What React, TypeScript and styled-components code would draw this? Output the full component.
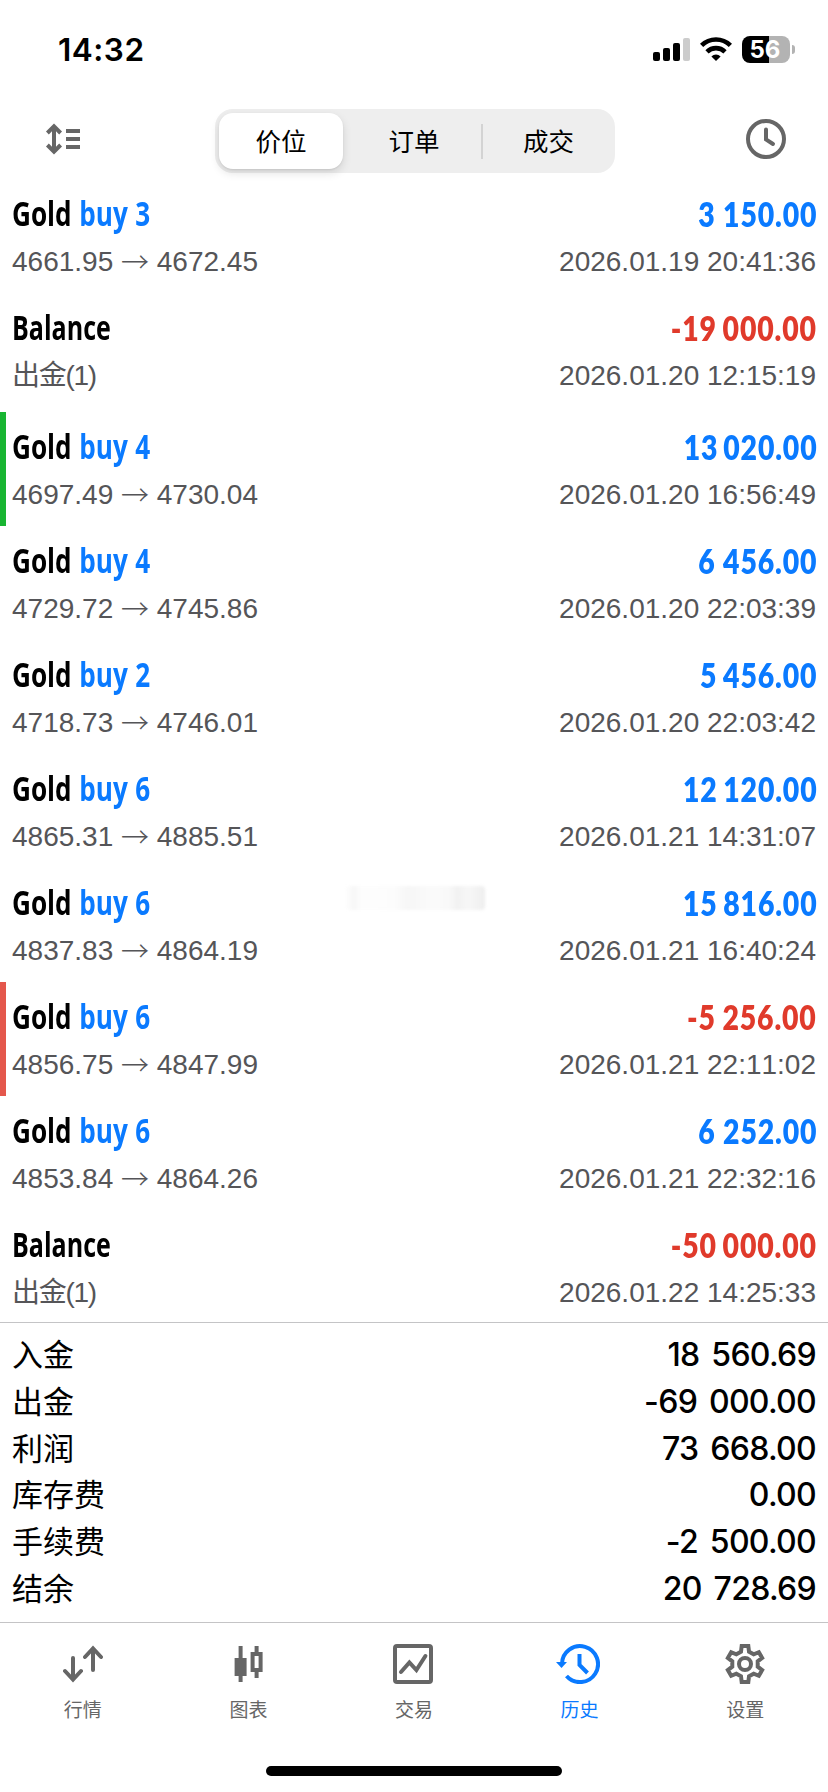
import React from 'react';
import styled, { createGlobalStyle } from 'styled-components';

const BLUE = '#0a7aff';
const RED = '#e03a2b';
const GREY = '#666666';

const Global = createGlobalStyle`
  * { box-sizing: border-box; }
  body { margin: 0; background: #fff; color: #000; font-family: "Inter", "Noto Sans CJK SC", sans-serif; }
`;

const Screen = styled.div`
  width: 828px;
  height: 1792px;
  display: flex;
  flex-direction: column;
  background: #fff;
  overflow: hidden;
  position: relative;
`;

const StatusBar = styled.div`
  height: 100px;
  flex: none;
  display: flex;
  justify-content: space-between;
  padding: 0 33px 0 58px;
`;

const Clock = styled.div`
  font-size: 31.5px;
  font-weight: 600;
  line-height: 40px;
  margin-top: 30px;
  letter-spacing: 0.5px;
`;

const StatusIcons = styled.div`
  display: flex;
  align-items: flex-start;
  margin-top: 36px;
`;

const Battery = styled.div`
  width: 48px;
  height: 27px;
  margin-left: 10px;
  border-radius: 8px;
  background: linear-gradient(90deg, #000 27px, #b3b3b3 27px);
  color: #fff;
  font-size: 24px;
  font-weight: 700;
  line-height: 27px;
  text-align: center;
  padding-right: 2px;
`;

const Nub = styled.div`
  width: 3px;
  height: 9px;
  margin: 9px 0 0 2px;
  border-radius: 0 4px 4px 0;
  background: #b3b3b3;
`;

const Toolbar = styled.div`
  height: 79px;
  flex: none;
  display: flex;
  justify-content: space-between;
  align-items: flex-start;
  padding: 9px 42px 0 44px;
`;

const ToolSlot = styled.div`
  width: 40px;
  height: 60px;
  display: flex;
  align-items: center;
`;

const Segments = styled.div`
  width: 400px;
  height: 64px;
  border-radius: 18px;
  background: #eeeeee;
  padding: 4px;
  display: flex;
  align-items: center;
`;

const Segment = styled.div<{ $active?: boolean; $w: number; $nudge?: number }>`
  width: ${(p) => p.$w}px;
  height: 56px;
  padding-left: ${(p) => p.$nudge ?? 0}px;
  border-radius: 14px;
  background: ${(p) => (p.$active ? '#fff' : 'transparent')};
  box-shadow: ${(p) => (p.$active ? '0 4px 10px rgba(0,0,0,0.12), 0 1px 2px rgba(0,0,0,0.08)' : 'none')};
  font: 400 25.5px/54px "Noto Sans CJK SC", sans-serif;
  text-align: center;
`;

const SegmentRule = styled.div`
  width: 2px;
  height: 35px;
  background: #d3d3d3;
`;

const List = styled.div`
  height: 1143px;
  flex: none;
  display: flex;
  flex-direction: column;
`;

const Deal = styled.div<{ $mark?: string; $h: number }>`
  height: ${(p) => p.$h}px;
  flex: none;
  padding: 11px 12px 0 6px;
  border-left: 6px solid ${(p) => p.$mark || 'transparent'};
`;

const Line = styled.div`
  height: 48px;
  display: flex;
  justify-content: space-between;
`;

const Name = styled.div<{ $scale: number }>`
  font: 700 33.5px/47px "Open Sans", sans-serif;
  white-space: pre;
  transform: scaleX(${(p) => p.$scale});
  transform-origin: left;
  word-spacing: 1px;
`;

const Side = styled.span`
  color: ${BLUE};
`;

const Amount = styled.div<{ $gap: number; $loss: boolean }>`
  font: 800 33px/48px Lato, sans-serif;
  color: ${(p) => (p.$loss ? RED : BLUE)};
  transform: scaleX(0.86);
  transform-origin: right;
  letter-spacing: 1px;
  margin-right: -1px;
  word-spacing: ${(p) => p.$gap}px;
`;

const Detail = styled.div<{ $tight?: boolean }>`
  font: 400 28px/47px "Liberation Sans", "Noto Sans CJK SC", sans-serif;
  font-kerning: none;
  letter-spacing: ${(p) => (p.$tight ? '-1.3px' : 'normal')};
  color: #555558;
  white-space: pre;
`;

const Arrow = styled.span`
  font-family: "Noto Sans CJK SC", sans-serif;
  font-weight: 300;
  line-height: 1;
  vertical-align: -2px;
`;

const Totals = styled.div`
  height: 300px;
  flex: none;
  border-top: 1px solid #c4c4c6;
  padding: 9px 12px 0;
`;

const TotalRow = styled.div`
  height: 46.8px;
  display: flex;
  justify-content: space-between;
  align-items: flex-start;
`;

const TotalLabel = styled.div`
  font: 400 31px/46px "Noto Sans CJK SC", sans-serif;
  margin-top: -2px;
`;

const TotalValue = styled.div`
  font: 500 32px/46px Inter, sans-serif;
  letter-spacing: -0.7px;
  word-spacing: 4px;
`;

const Tabs = styled.div`
  flex: 1;
  border-top: 1px solid #c4c4c6;
  display: grid;
  grid-template-columns: repeat(5, 1fr);
  padding-top: 21px;
  align-content: start;
`;

const Tab = styled.div<{ $active?: boolean }>`
  display: flex;
  flex-direction: column;
  align-items: center;
  gap: 10px;
  color: ${(p) => (p.$active ? BLUE : GREY)};
  font: 400 19px/30px "Noto Sans CJK SC", sans-serif;
`;

const HomeBar = styled.div`
  position: absolute;
  left: 266px;
  bottom: 16px;
  width: 296px;
  height: 10px;
  border-radius: 5px;
  background: #000;
`;

const Smudge = styled.div`
  position: absolute;
  left: 345px;
  top: 886px;
  width: 140px;
  height: 24px;
  border-radius: 4px;
  background: linear-gradient(90deg, #fff, #f7f7f7 6%, #fdfdfd 12%, #fcfcfc 35%, #f6f6f6 45%, #fafafa 60%, #f9f9f9 74%, #f1f1f1 80%, #f7f7f7 88%, #eeeeee);
  filter: blur(1.5px);
`;

const icon = { width: 40, height: 40, viewBox: '0 0 40 40', fill: 'none', stroke: 'currentColor', strokeWidth: 4 };

const Signal = () => (
  <svg width="37" height="27" viewBox="0 0 37 27">
    <rect x="0" y="16" width="7" height="9" rx="2" />
    <rect x="10" y="12" width="7" height="13" rx="2" />
    <rect x="20" y="7" width="7" height="18" rx="2" />
    <rect x="30" y="2" width="7" height="23" rx="2" fill="#ccc" />
  </svg>
);

const WifiSvg = styled.svg`
  margin-left: 10px;
`;

const Wifi = () => (
  <WifiSvg width="32" height="27" viewBox="0 0 32 27" fill="none" stroke="#000" strokeWidth="4.6">
    <path d="M1.6 9.4a20.6 20.6 0 0 1 28.8 0" />
    <path d="M7 15.8a12.8 12.8 0 0 1 18 0" />
    <path d="M16 25l-4.6-4.6a6.6 6.6 0 0 1 9.2 0z" fill="#000" stroke="none" />
  </WifiSvg>
);

const SortIcon = () => (
  <svg {...icon} color={GREY}>
    <path d="M10 7v26M3.4 14l6.600-6.600 6.600 6.600M3.4 26l6.600 6.600 6.600-6.600M22 12h14M22 20h14M22 28h14" />
  </svg>
);

const ClockIcon = () => (
  <svg {...icon} color={GREY}>
    <circle cx="20" cy="20" r="18" />
    <path d="M20 10.500v10l7 4.500" strokeLinecap="round" />
  </svg>
);

const QuotesIcon = () => (
  <svg {...icon} strokeLinecap="round">
    <path d="M10 14v21M2 27l8 8.500 8-8.500M30 26V5M22 13l8-8.500 8 8.500" />
  </svg>
);

const ChartIcon = () => (
  <svg {...icon}>
    <path d="M12.600 2v36M28.600 2v8M28.600 28v6" />
    <path d="M6.600 14h12v18h-12z" fill="currentColor" stroke="none" />
    <path d="M24.600 10h8v16h-8z" />
  </svg>
);

const ShiftedSvg = styled.svg<{ $by: number }>`
  margin-right: ${(p) => p.$by}px;
`;

const TradeIcon = () => (
  <ShiftedSvg {...icon} $by={2}>
    <rect x="2" y="2" width="36" height="36" rx="2" />
    <path d="M8 28l8.400-9.600 7 7.600 9-14" strokeLinecap="round" />
  </ShiftedSvg>
);

const HistoryIcon = () => (
  <ShiftedSvg {...icon} width={44} viewBox="0 0 44 40" $by={4}>
    <path d="M6 20A18 18 0 1 1 10.500 32" />
    <path d="M0 18h11l-5.500 6z" fill="currentColor" stroke="none" />
    <path d="M23.500 10v11l8 8" />
  </ShiftedSvg>
);

const polar = (r: number, deg: number) => {
  const a = (deg * Math.PI) / 180;
  return `${(20 + r * Math.sin(a)).toFixed(2)},${(20 - r * Math.cos(a)).toFixed(2)}`;
};

const gearOutline = [0, 60, 120, 180, 240, 300]
  .map((t) => [polar(13, t - 18), polar(18.2, t - 10.5), polar(18.2, t + 10.5), polar(13, t + 18)].join(' '))
  .join(' ');

const GearIcon = () => (
  <svg {...icon}>
    <polygon points={gearOutline} />
    <circle cx="20" cy="20" r="6" />
  </svg>
);

type Entry = { side?: string; from?: string; to?: string; amount: string; time: string; mark?: string; h?: number; gap?: number };

const entries: Entry[] = [
  { side: 'buy 3', from: '4661.95', to: '4672.45', amount: '3 150.00', time: '2026.01.19 20:41:36' },
  { amount: '-19 000.00', time: '2026.01.20 12:15:19', h: 119, gap: -2 },
  { side: 'buy 4', from: '4697.49', to: '4730.04', amount: '13 020.00', time: '2026.01.20 16:56:49', mark: '#18b532', gap: -3 },
  { side: 'buy 4', from: '4729.72', to: '4745.86', amount: '6 456.00', time: '2026.01.20 22:03:39' },
  { side: 'buy 2', from: '4718.73', to: '4746.01', amount: '5 456.00', time: '2026.01.20 22:03:42', gap: -2 },
  { side: 'buy 6', from: '4865.31', to: '4885.51', amount: '12 120.00', time: '2026.01.21 14:31:07', gap: -2 },
  { side: 'buy 6', from: '4837.83', to: '4864.19', amount: '15 816.00', time: '2026.01.21 16:40:24', gap: -2 },
  { side: 'buy 6', from: '4856.75', to: '4847.99', amount: '-5 256.00', time: '2026.01.21 22:11:02', mark: '#e4574c', gap: -1 },
  { side: 'buy 6', from: '4853.84', to: '4864.26', amount: '6 252.00', time: '2026.01.21 22:32:16' },
  { amount: '-50 000.00', time: '2026.01.22 14:25:33', h: 112, gap: -2 },
];

const totals = [
  ['入金', '18 560.69'],
  ['出金', '-69 000.00'],
  ['利润', '73 668.00'],
  ['库存费', '0.00'],
  ['手续费', '-2 500.00'],
  ['结余', '20 728.69'],
];

const tabs = [
  { label: '行情', Icon: QuotesIcon },
  { label: '图表', Icon: ChartIcon },
  { label: '交易', Icon: TradeIcon },
  { label: '历史', Icon: HistoryIcon, active: true },
  { label: '设置', Icon: GearIcon },
];

export default function App() {
  return (
    <Screen>
      <Global />
      <StatusBar>
        <Clock>14:32</Clock>
        <StatusIcons>
          <Signal />
          <Wifi />
          <Battery>56</Battery>
          <Nub />
        </StatusIcons>
      </StatusBar>
      <Toolbar>
        <ToolSlot><SortIcon /></ToolSlot>
        <Segments>
          <Segment $active $w={124}>价位</Segment>
          <Segment $w={138} $nudge={4}>订单</Segment>
          <SegmentRule />
          <Segment $w={128} $nudge={3}>成交</Segment>
        </Segments>
        <ToolSlot><ClockIcon /></ToolSlot>
      </Toolbar>
      <List>
        {entries.map((e) => (
          <Deal key={e.time} $mark={e.mark} $h={e.h ?? 114}>
            <Line>
              <Name $scale={e.side ? 0.78 : 0.747}>{e.side ? <>Gold <Side>{e.side}</Side></> : 'Balance'}</Name>
              <Amount $gap={e.gap ?? 0} $loss={e.amount.startsWith('-')}>{e.amount}</Amount>
            </Line>
            <Line>
              <Detail $tight={!e.from}>{e.from ? <>{e.from} <Arrow>→</Arrow> {e.to}</> : '出金(1)'}</Detail>
              <Detail>{e.time}</Detail>
            </Line>
          </Deal>
        ))}
      </List>
      <Totals>
        {totals.map(([label, value]) => (
          <TotalRow key={label}>
            <TotalLabel>{label}</TotalLabel>
            <TotalValue>{value}</TotalValue>
          </TotalRow>
        ))}
      </Totals>
      <Tabs>
        {tabs.map(({ label, Icon, active }) => (
          <Tab key={label} $active={active}>
            <Icon />
            {label}
          </Tab>
        ))}
      </Tabs>
      <Smudge />
      <HomeBar />
    </Screen>
  );
}
